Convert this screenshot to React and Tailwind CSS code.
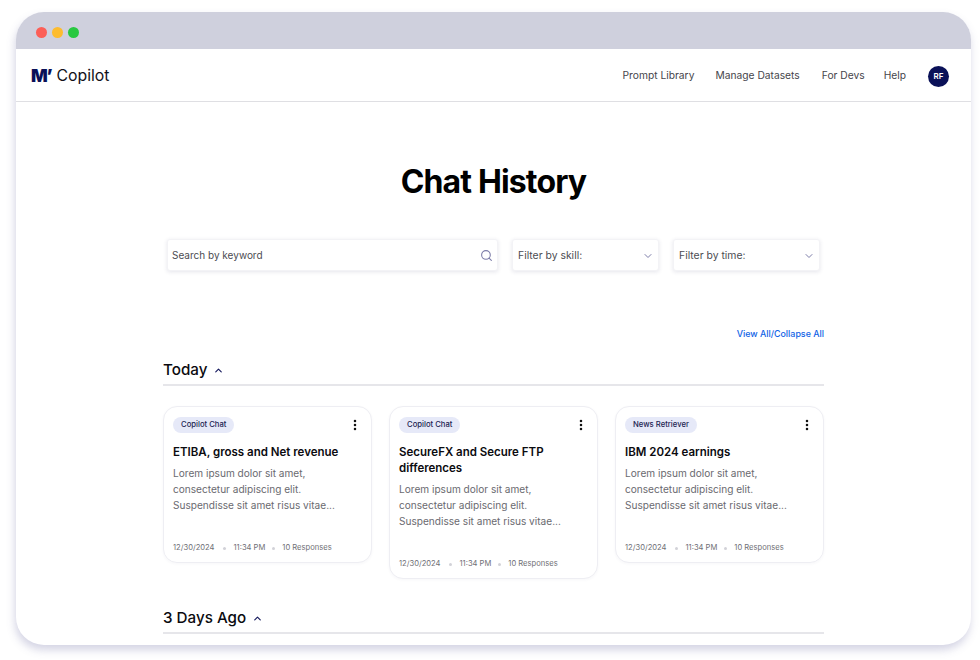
import { ChevronDown, ChevronUp, MoreVertical, Search } from "lucide-react";

const cards = [
  { tag: "Copilot Chat", title: "ETIBA, gross and Net revenue" },
  { tag: "Copilot Chat", title: "SecureFX and Secure FTP differences" },
  { tag: "News Retriever", title: "IBM 2024 earnings" },
];

const navLinks = [
  { label: "Prompt Library", gap: "mr-[21px]" },
  { label: "Manage Datasets", gap: "mr-[22px]" },
  { label: "For Devs", gap: "mr-[19px]" },
  { label: "Help", gap: "mr-[22px]" },
];

const Card = ({ tag, title }) => (
  <div className="w-[209px] rounded-[14px] border border-[#eeeef3] bg-white px-[9px] pt-[10px] pb-[8px] shadow-[0_1px_3px_rgba(40,40,90,0.04)]">
    <div className="flex h-[16px] items-center justify-between">
      <span className="flex h-[16px] items-center rounded-full bg-[#e6e9f8] px-[8px] text-[7.7px] font-medium text-[#1c2452]">
        {tag}
      </span>
      <MoreVertical className="h-[14px] w-[14px] text-[#111]" strokeWidth={2.4} />
    </div>
    <h3 className="mt-[11px] text-[11.5px] leading-[16px] font-semibold text-[#0b0b0f]">{title}</h3>
    <p className="mt-[5px] text-[10.1px] leading-[16px] text-[#6a6a70]">
      Lorem ipsum dolor sit amet, consectetur adipiscing elit. Suspendisse sit amet risus vitae...
    </p>
    <div className="mt-[29px] flex items-center text-[7.6px] leading-[12px] text-[#6f6f75]">
      <span>12/30/2024</span>
      <span className="mx-[8px] h-[3px] w-[3px] rounded-full bg-[#d2d2d8]" />
      <span>11:34 PM</span>
      <span className="mx-[7px] h-[3px] w-[3px] rounded-full bg-[#d2d2d8]" />
      <span>10 Responses</span>
    </div>
  </div>
);

const SectionHeading = ({ label }) => (
  <div className="flex h-[31px] items-center gap-[6px] border-b-2 border-[#e6e6ea] pt-[1px]">
    <span className="text-[15.2px] font-medium text-[#0b0b0f]">{label}</span>
    <ChevronUp className="h-[11px] w-[11px] text-[#14185c]" strokeWidth={2.5} />
  </div>
);

const FilterBox = ({ label }) => (
  <div className="flex h-[32px] w-[147px] items-center justify-between rounded-[3px] border border-[#f3f3f6] bg-white px-[5px] pt-[1px] shadow-[0_1px_4px_rgba(40,40,90,0.12)]">
    <span className="text-[10.4px] text-[#4c4c52]">{label}</span>
    <ChevronDown className="mr-[-1px] h-[12px] w-[12px] text-[#7c7ca8]" />
  </div>
);

export default function App() {
  return (
    <div className="h-[660px] w-[980px] overflow-hidden bg-white pt-[12px] pl-[16px] font-['Inter','Liberation_Sans',sans-serif]">
      <div className="h-[633px] w-[955px] overflow-hidden rounded-[28px] bg-white shadow-[-1px_5px_9px_rgba(90,90,150,0.26)]">
        <div className="flex h-[37px] items-center gap-[5px] bg-[#cfd0dd] pt-[3px] pl-[20px]">
          <span className="h-[11px] w-[11px] rounded-full bg-[#fc5f57]" />
          <span className="h-[11px] w-[11px] rounded-full bg-[#fdbc2e]" />
          <span className="h-[11px] w-[11px] rounded-full bg-[#28c840]" />
        </div>

        <div className="flex h-[53px] items-center justify-between border-b border-[#dfdfe3] pt-[2px] pr-[22px] pl-[15px]">
          <div className="flex items-center gap-[5px]">
            <span className="text-[17.5px] leading-none font-black tracking-[-1.2px] text-[#0a1158]">M’</span>
            <span className="text-[15.8px] font-normal text-[#111118]">Copilot</span>
          </div>
          <div className="flex items-center text-[10.25px] text-[#45454b]">
            {navLinks.map((link) => (
              <span key={link.label} className={link.gap}>
                {link.label}
              </span>
            ))}
            <span className="flex h-[21px] w-[21px] items-center justify-center rounded-full bg-[#0a1158] text-[8px] font-semibold text-white">
              RF
            </span>
          </div>
        </div>

        <h1 className="mt-[58px] text-center text-[32px] leading-[44px] font-bold tracking-[-0.85px] text-black">
          Chat History
        </h1>

        <div className="mt-[35px] ml-[151px] flex gap-[14px]">
          <div className="flex h-[32px] w-[331px] items-center justify-between rounded-[3px] border border-[#f3f3f6] bg-white px-[4px] pt-[1px] shadow-[0_1px_4px_rgba(40,40,90,0.12)]">
            <span className="text-[10px] text-[#4c4c52]">Search by keyword</span>
            <Search className="h-[13px] w-[13px] text-[#7c7ca8]" />
          </div>
          <FilterBox label="Filter by skill:" />
          <FilterBox label="Filter by time:" />
        </div>

        <div className="mt-[56px] mr-[147px] ml-[147px]">
          <div className="flex h-[13px] items-center justify-end text-[8.9px] font-medium text-[#0f62e6]">
            View All/Collapse All
          </div>
          <div className="mt-[15px]">
            <SectionHeading label="Today" />
          </div>
          <div className="mt-[20px] flex items-start justify-between">
            {cards.map((card) => (
              <Card key={card.title} {...card} />
            ))}
          </div>
          <div className="mt-[24px]">
            <SectionHeading label="3 Days Ago" />
          </div>
        </div>
      </div>
    </div>
  );
}
